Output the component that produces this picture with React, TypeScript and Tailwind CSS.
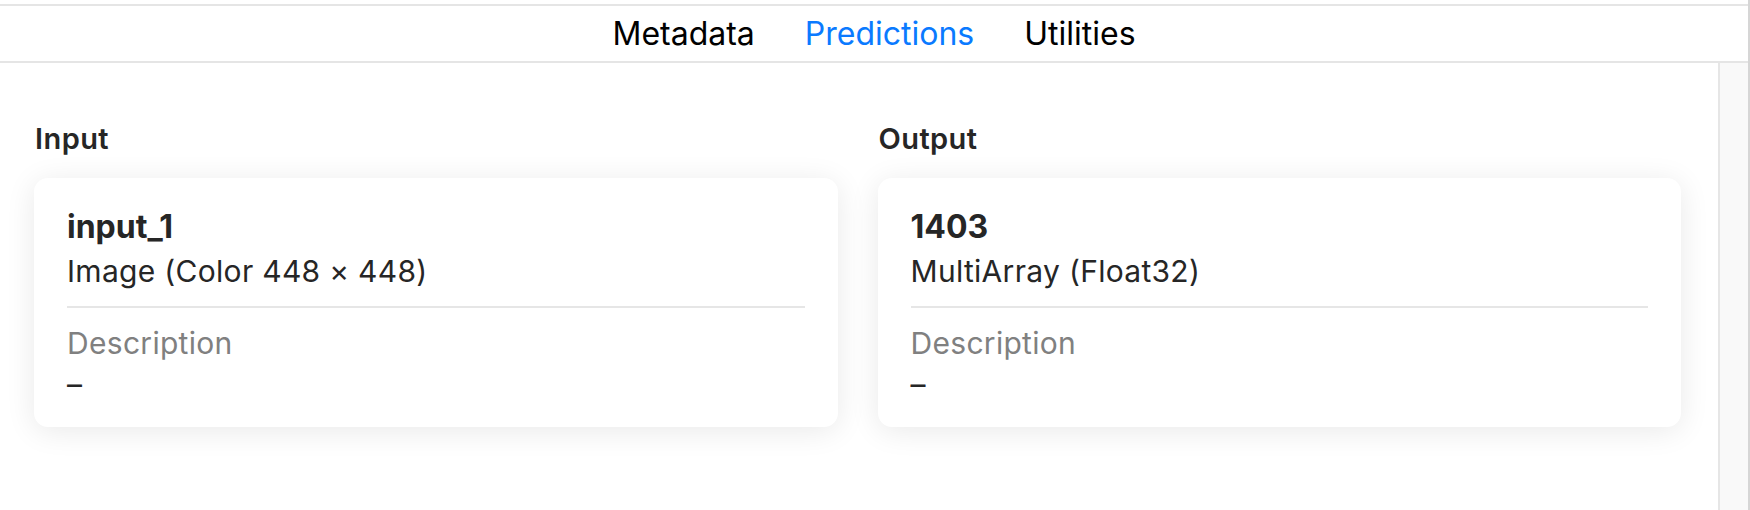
import React from "react";

interface FeatureProps {
  title: string;
  name: string;
  type: string;
}

const tabs = ["Metadata", "Predictions", "Utilities"];

const FeatureCard: React.FC<FeatureProps> = ({ title, name, type }) => (
  <div className="flex flex-col">
    <h2 className="text-[29px] leading-[36px] font-semibold tracking-[0.015em] text-[#262626] pl-px">{title}</h2>
    <div className="mt-[21px] rounded-[14px] bg-white shadow-[0_4px_30px_rgba(0,0,0,0.09)] pt-[27px] pb-[22px] px-[33px]">
      {/* Name & type */}
      <div className="text-[32px] leading-[44px] font-bold text-[#262626]">{name}</div>
      <div className="text-[30px] leading-[44px] tracking-[0.01em] text-[#262626]">{type}</div>
      <div className="mt-[13px] h-[2px] bg-[#e6e6e6]" />
      <div className="mt-[15px] text-[30px] leading-[40px] tracking-[0.01em] text-[#808080]">Description</div>
      <div className="text-[30px] leading-[42px] text-[#262626]">–</div>
    </div>
  </div>
);

export default function App() {
  return (
    <div className="flex h-[510px] w-full overflow-hidden bg-white font-['Inter',sans-serif]">
      <div className="flex flex-1 flex-col">
        <div className="h-[4px]" />
        <div className="h-[2px] bg-[#e5e5e5]" />
        {/* Tab bar */}
        <nav className="flex h-[55px] items-center justify-center gap-[50px] text-[32px] text-black">
          {tabs.map((t) => (
            <span key={t} className={t === "Predictions" ? "text-[#0a7aff]" : ""}>
              {t}
            </span>
          ))}
        </nav>
        <div className="h-[2px] bg-[#e5e5e5]" />
        <div className="flex flex-1">
          <main className="flex-1 pl-[34px] pr-[37px] pt-[58px]">
            <div className="grid grid-cols-2 gap-x-[40px]">
              <FeatureCard title="Input" name="input_1" type="Image (Color 448 × 448)" />
              <FeatureCard title="Output" name="1403" type="MultiArray (Float32)" />
            </div>
          </main>
          {/* Scroll track */}
          <div className="w-[30px] border-l-2 border-[#e6e6e6] bg-[#f9f9f9]" />
        </div>
      </div>
      <div className="w-[2px] bg-[#d6d6d6]" />
    </div>
  );
}
